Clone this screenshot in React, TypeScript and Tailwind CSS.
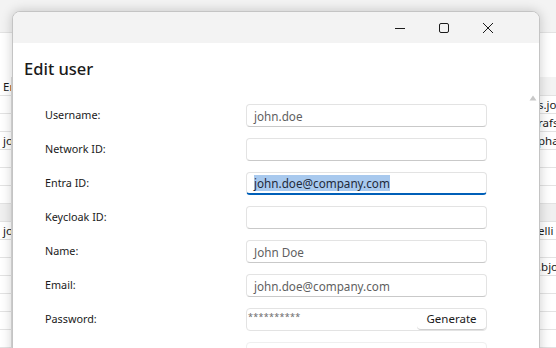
import React from "react";

const font = { fontFamily: '"Noto Sans", "Open Sans", sans-serif' };

const rowsBg: { left?: string; right?: string; gray?: boolean }[] = [
  { right: "s.jo" },
  { right: "rafs" },
  { left: "jo", right: "pha" },
  {},
  {},
  {},
  { gray: true },
  { left: "jo", right: "elli" },
  {},
  { right: ".bjo" },
  {},
  {},
  {},
  {},
];

function Background() {
  return (
    <div className="w-[556px] h-[348px] overflow-hidden bg-white text-[11.5px] text-[#1a1a1a]" style={font}>
      <div className="h-[33px] bg-[#f3f3f3] border-b border-[#e3e3e3]" />
      <div className="h-[44px]" />
      <div className="flex h-[19px] border-b border-[#e3e3e3]">
        <div className="w-[12px] border-r border-[#e0e0e0] pl-[3px] overflow-hidden leading-[19px]">Er</div>
        <div className="flex-1" />
        <div className="w-[16px] bg-[#f3f3f3]" />
      </div>
      {rowsBg.map((r, i) => (
        <div
          key={i}
          className={`flex h-[18px] border-b border-[#e3e3e3] ${r.gray ? "bg-[#f0f0f0]" : ""}`}
        >
          <div className="w-[12px] border-r border-[#e0e0e0] pl-[3px] overflow-hidden leading-[17px] whitespace-nowrap">
            {r.left}
          </div>
          <div className="flex-1" />
          <div className="w-[18px] leading-[17px] whitespace-nowrap overflow-hidden">{r.right}</div>
        </div>
      ))}
    </div>
  );
}

function Field({ value, focused, faint }: { value?: string; focused?: boolean; faint?: boolean }) {
  return (
    <div
      className={`h-[23px] w-[241px] rounded-[4px] border bg-white flex items-center px-[7px] ${
        focused
          ? "border-[#e3e3e3] border-b-2 border-b-[#005fb8]"
          : faint
          ? "border-[#efefef]"
          : "border-[#e3e3e3] border-b-[#c9c9c9]"
      }`}
    >
      {value && (
        <span
          className={`text-[11.7px] leading-[16px] whitespace-nowrap ${
            focused ? "bg-[#a8c9ee] text-[#1f2a3a]" : "text-[#5f5f5f]"
          }`}
        >
          {value}
        </span>
      )}
    </div>
  );
}

const rows: { label: string; value?: string; focused?: boolean; password?: boolean; faint?: boolean }[] = [
  { label: "Username:", value: "john.doe" },
  { label: "Network ID:" },
  { label: "Entra ID:", value: "john.doe@company.com", focused: true },
  { label: "Keycloak ID:" },
  { label: "Name:", value: "John Doe" },
  { label: "Email:", value: "john.doe@company.com" },
  { label: "Password:", password: true },
  { label: "", faint: true },
];

function Dialog() {
  return (
    <div
      className="absolute left-[12px] top-[11px] w-[528px] h-[400px] rounded-t-[8px] border border-[#c4c4c4] bg-white shadow-[0_0_12px_rgba(0,0,0,0.2)] overflow-hidden"
      style={font}
    >
      <div className="h-[31px] bg-[#f3f3f3] flex justify-end items-center pr-[29px]">
        <div className="w-[44px] h-full flex items-center justify-center">
          <svg width="12" height="12" viewBox="0 0 12 12">
            <path d="M1 6.5H11" stroke="#1b1b1b" strokeWidth="1" />
          </svg>
        </div>
        <div className="w-[44px] h-full flex items-center justify-center">
          <svg width="12" height="12" viewBox="0 0 12 12">
            <rect x="1.5" y="1.5" width="9" height="9" rx="1.5" fill="none" stroke="#1b1b1b" strokeWidth="1" />
          </svg>
        </div>
        <div className="w-[44px] h-full flex items-center justify-center">
          <svg width="12" height="12" viewBox="0 0 12 12">
            <path d="M1 1L11 11M11 1L1 11" stroke="#1b1b1b" strokeWidth="1" />
          </svg>
        </div>
      </div>
      <div className="pl-[11px]">
        <div className="mt-[14px] h-[24px] text-[16.5px] font-medium leading-[24px] text-[#1a1a1a]">Edit user</div>
        <div className="mt-[23px] pl-[21px] flex flex-col gap-[11px]">
          {rows.map((r, i) => (
            <div key={i} className="flex items-center h-[23px]">
              <div className="w-[201px] text-[10.8px] text-[#1a1a1a]">{r.label}</div>
              {r.password ? (
                <div className="h-[23px] w-[241px] rounded-[4px] border border-[#e3e3e3] bg-white flex">
                  <div className="flex-1 pl-[1px] pt-[2px] text-[9px] leading-[12px] text-[#6a6a6a] tracking-[0.3px]">
                    **********
                  </div>
                  <div className="w-[69px] h-full rounded-[4px] border-b border-[#cfcfcf] flex items-center justify-center text-[11.5px] text-[#1a1a1a]">
                    Generate
                  </div>
                </div>
              ) : (
                <Field value={r.value} focused={r.focused} faint={r.faint} />
              )}
            </div>
          ))}
        </div>
      </div>
      <svg className="absolute left-[516px] top-[83px]" width="8" height="6" viewBox="0 0 8 6">
        <path d="M4 0.5L7.5 5.5H0.5Z" fill="#c8c8c8" />
      </svg>
    </div>
  );
}

export default function App() {
  return (
    <div className="relative w-[556px] h-[348px] overflow-hidden">
      <Background />
      <Dialog />
    </div>
  );
}
